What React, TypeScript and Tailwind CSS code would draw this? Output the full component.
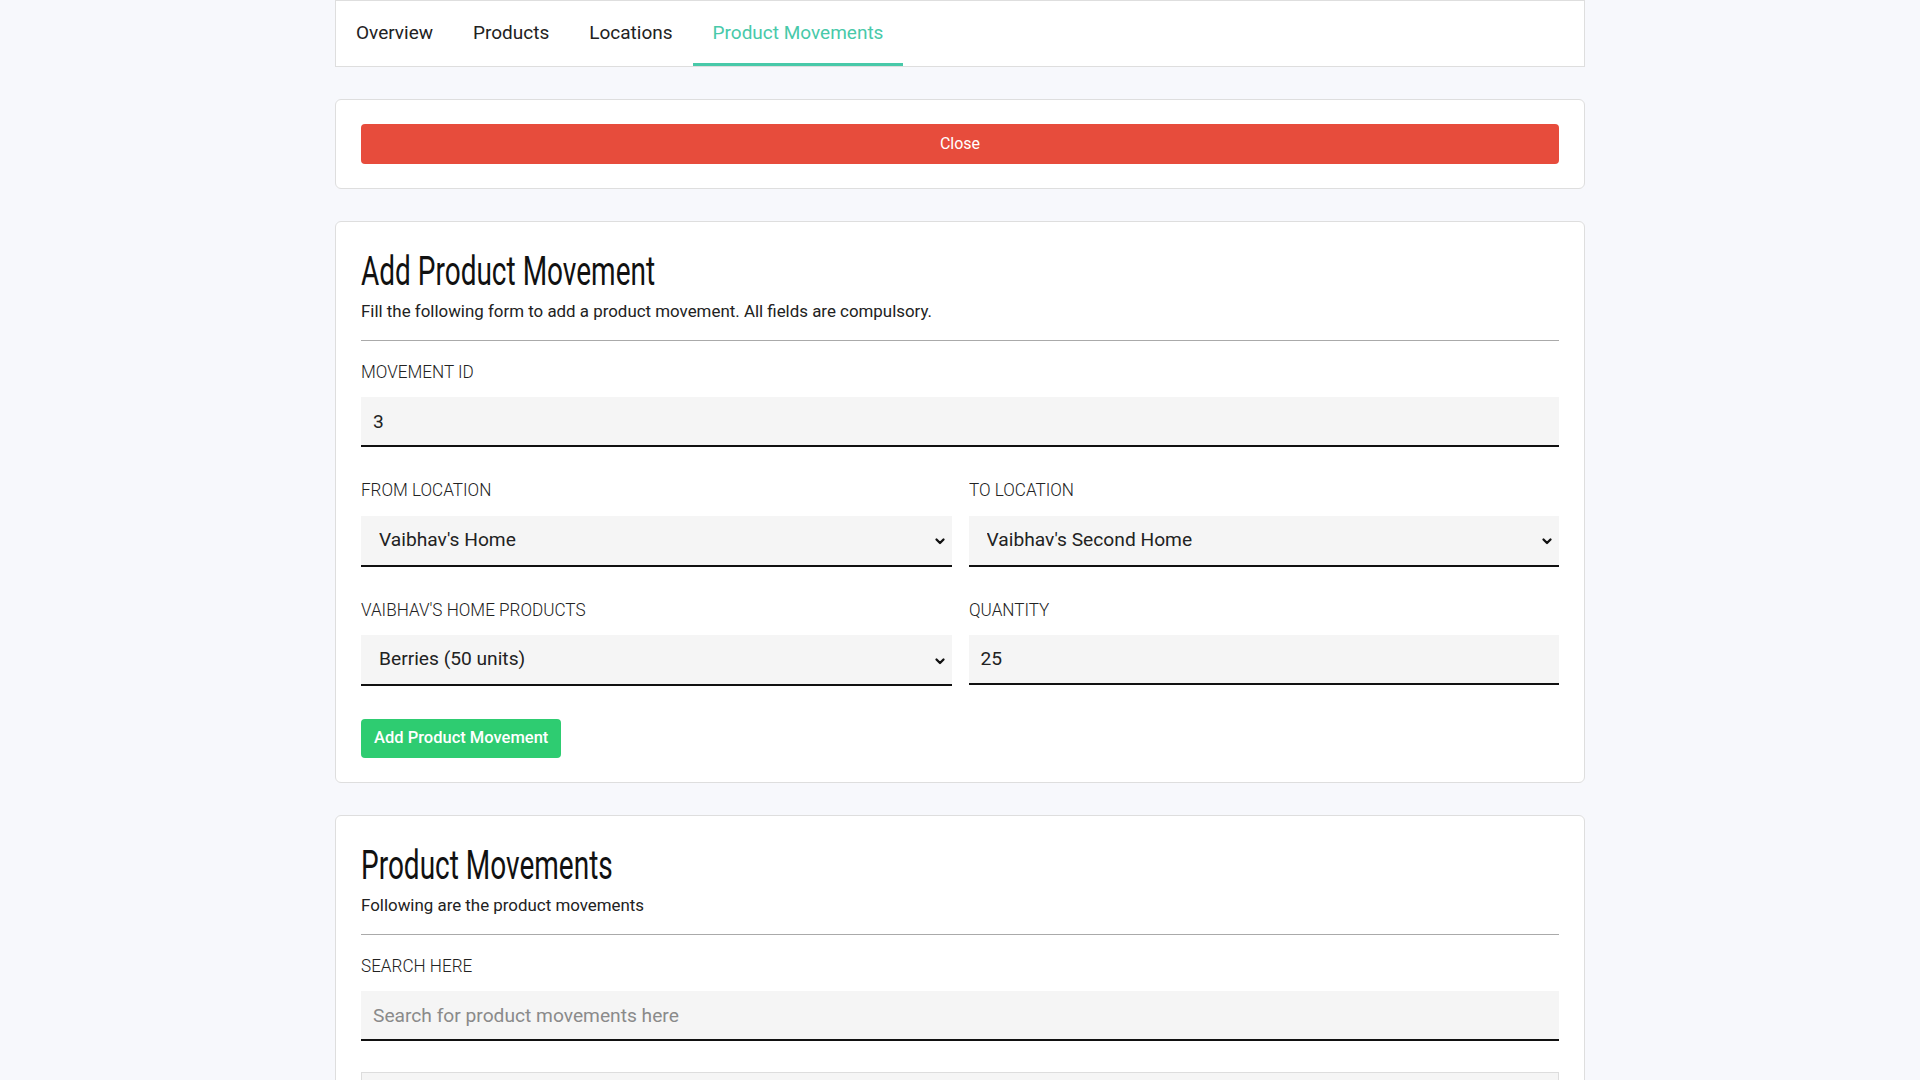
import React from "react";

function Chevron() {
  return (
    <svg
      className="pointer-events-none absolute right-[6px] top-1/2 -translate-y-1/2"
      width="12"
      height="12"
      viewBox="0 0 12 12"
      fill="none"
    >
      <polyline points="2.5,4.5 6,8 9.5,4.5" stroke="#111" strokeWidth="2.3" strokeLinecap="round" strokeLinejoin="round" />
    </svg>
  );
}

function Label({ children }: { children: React.ReactNode }) {
  return (
    <div className="origin-left scale-x-[0.9] whitespace-nowrap text-[19px] font-light leading-[24px] text-[#222] uppercase">
      {children}
    </div>
  );
}

function TextInput({ value, placeholder }: { value?: string; placeholder?: string }) {
  return (
    <input
      className="mt-[13px] block h-[50px] w-full bg-[#f5f5f5] border-b-2 border-[#111] px-[12px] text-[19.2px] text-[#222] outline-none placeholder:text-[#8a8a8a]"
      defaultValue={value}
      placeholder={placeholder}
    />
  );
}

function Select({ value }: { value: string }) {
  return (
    <div className="relative mt-[13.5px]">
      <select
        className="block h-[51px] w-full appearance-none bg-[#f5f5f5] border-b-2 border-[#111] pl-[18px] pr-[30px] text-[19.2px] text-[#222] outline-none"
        defaultValue={value}
      >
        <option value={value}>{value}</option>
      </select>
      <Chevron />
    </div>
  );
}

function Heading({ children }: { children: React.ReactNode }) {
  return (
    <h2 className="mt-[2px] origin-left scale-x-[0.7] text-[40px] leading-[48px] text-[#111] font-normal whitespace-nowrap">
      {children}
    </h2>
  );
}

export default function App() {
  const tabs = ["Overview", "Products", "Locations", "Product Movements"];
  return (
    <div className="min-h-screen bg-[#f7f8fc] font-['Roboto','Open_Sans',sans-serif] text-[#222]">
      <div className="mx-auto w-[1250px]">
        <nav className="flex h-[67px] border border-[#dedede] bg-white">
          {tabs.map((t, i) => {
            const active = i === 3;
            return (
              <div
                key={t}
                className={
                  "relative flex items-center px-[20px] pb-[1px] text-[19px] " +
                  (active ? "text-[#48c9a9]" : "text-[#222]")
                }
              >
                {t}
                {active && <span className="absolute bottom-0 left-0 right-0 h-[3px] bg-[#48c9a9]" />}
              </div>
            );
          })}
        </nav>

        <div className="mt-[32px] rounded-md border border-[#dedede] bg-white px-[25px] py-6">
          <button className="flex h-10 w-full items-center justify-center rounded-[4px] bg-[#e74c3c] text-[16px] text-white">
            Close
          </button>
        </div>

        <div className="mt-8 rounded-md border border-[#dedede] bg-white px-[25px] py-6">
          <Heading>Add Product Movement</Heading>
          <p className="mt-[4px] text-[16.9px] leading-[22px] text-[#222]">
            Fill the following form to add a product movement. All fields are compulsory.
          </p>
          <div className="mt-[18px] h-px bg-[#aaaaaa]" />

          <div className="mt-[19px]">
            <Label>Movement ID</Label>
            <TextInput value="3" />
          </div>

          <div className="mt-[31px] grid grid-cols-2 gap-x-[17px]">
            <div>
              <Label>From Location</Label>
              <Select value="Vaibhav's Home" />
            </div>
            <div>
              <Label>To Location</Label>
              <Select value="Vaibhav's Second Home" />
            </div>
          </div>

          <div className="mt-[31px] grid grid-cols-2 items-start gap-x-[17px]">
            <div>
              <Label>Vaibhav's Home Products</Label>
              <Select value="Berries (50 units)" />
            </div>
            <div>
              <Label>Quantity</Label>
              <TextInput value="25" />
            </div>
          </div>

          <button className="mt-[33px] h-[39px] rounded-[4px] bg-[#2ecc71] px-[13px] text-[16.5px] font-medium text-white">
            Add Product Movement
          </button>
        </div>

        <div className="mt-8 rounded-md border border-[#dedede] bg-white px-[25px] py-6">
          <Heading>Product Movements</Heading>
          <p className="mt-[4px] text-[16.9px] leading-[22px] text-[#222]">Following are the product movements</p>
          <div className="mt-[18px] h-px bg-[#aaaaaa]" />

          <div className="mt-[19px]">
            <Label>Search Here</Label>
            <TextInput placeholder="Search for product movements here" />
          </div>

          <div className="mt-[31px] h-[200px] border border-[#dddddd] bg-[#f5f5f5]" />
        </div>
      </div>
    </div>
  );
}
